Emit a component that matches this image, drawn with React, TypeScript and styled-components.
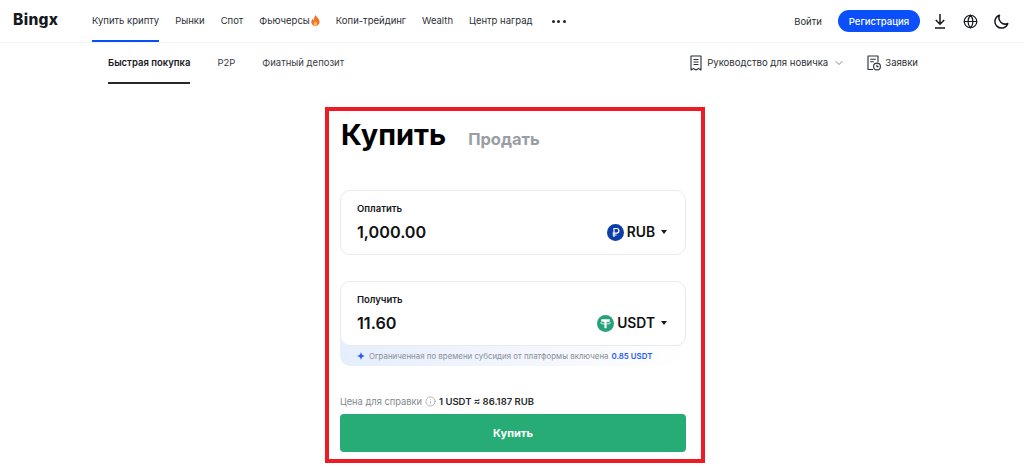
import styled, { createGlobalStyle } from "styled-components";
import { ChevronDown, Globe, Info } from "lucide-react";

const GlobalStyle = createGlobalStyle`
  html, body {
    margin: 0;
    padding: 0;
    background: #fff;
    font-family: Inter, "Noto Sans", sans-serif;
    color: #111;
  }
  * { box-sizing: border-box; }
`;

const Page = styled.div`
  width: 1024px;
  height: 467px;
  overflow: hidden;
`;

const Header = styled.header`
  height: 43px;
  display: flex;
  align-items: center;
  padding: 0 15px 0 13px;
  border-bottom: 1px solid #f2f3f4;
`;

const Logo = styled.div`
  width: 79px;
  font-size: 15.5px;
  font-weight: 800;
  letter-spacing: 0.35px;
  color: #16181c;
  line-height: 1;
  margin-top: -2px;
`;

const Nav = styled.nav`
  display: flex;
  align-items: stretch;
  gap: 16px;
  height: 42px;
`;

const NavItem = styled.a<{ $active?: boolean }>`
  display: flex;
  align-items: center;
  gap: 1px;
  font-size: 9.5px;
  color: #2b2f36;
  white-space: nowrap;
  padding-top: 1px;
  border-bottom: 2px solid ${(p) => (p.$active ? "#0a4ffa" : "transparent")};
`;

const Dots = styled.span`
  display: flex;
  gap: 2.5px;
  align-items: center;
  margin-left: 3px;
  & > i {
    width: 3px;
    height: 3px;
    border-radius: 50%;
    background: #22252a;
  }
`;

const Right = styled.div`
  margin-left: auto;
  display: flex;
  align-items: center;
`;

const Login = styled.a`
  font-size: 9.55px;
  color: #2b2f36;
  margin-right: 16px;
`;

const Register = styled.button`
  width: 82px;
  height: 22px;
  border: none;
  border-radius: 11px;
  background: #0a4ffa;
  color: #fff;
  font: 500 9.55px Inter, sans-serif;
  padding: 0;
  margin-right: 13px;
`;

const HeaderIcons = styled.div`
  display: flex;
  align-items: center;
  gap: 16px;
  color: #16181c;
`;

const SubNav = styled.div`
  height: 41px;
  display: flex;
  align-items: stretch;
  padding: 0 106px 0 108px;
`;

const Tab = styled.a<{ $active?: boolean }>`
  display: flex;
  align-items: center;
  font-size: 9.5px;
  font-weight: ${(p) => (p.$active ? 600 : 400)};
  color: ${(p) => (p.$active ? "#16181c" : "#3a3e45")};
  margin-right: 27px;
  border-bottom: 2px solid ${(p) => (p.$active ? "#26282c" : "transparent")};
`;

const SubRight = styled.div`
  margin-left: auto;
  display: flex;
  align-items: center;
  gap: 22px;
  font-size: 9.55px;
  color: #2b2f36;
  padding-bottom: 2px;
`;

const SubLink = styled.a<{ $gap: number }>`
  display: flex;
  align-items: center;
  gap: ${(p) => p.$gap}px;
`;

const Main = styled.main`
  display: flex;
  justify-content: center;
  padding-top: 23px;
  padding-left: 6px;
`;

const TradeBox = styled.section`
  width: 380px;
  height: 356px;
  border: 4px solid #ed1c24;
  padding: 0 15px 0 11px;
  display: flex;
  flex-direction: column;
`;

const Titles = styled.div`
  display: flex;
  align-items: flex-end;
  height: 44px;
  gap: 22px;
  margin-bottom: 35px;
`;

const Title = styled.h1`
  margin: 0 0 0 1px;
  font-size: 29px;
  font-weight: 700;
  line-height: 40px;
  color: #000;
`;

const SellTab = styled.span`
  font-size: 16.5px;
  font-weight: 700;
  line-height: 24px;
  margin-bottom: 4px;
  color: #9a9da3;
`;

const Field = styled.div`
  position: relative;
  z-index: 1;
  height: 65px;
  background: #fff;
  border: 1px solid #e9eaec;
  border-radius: 10px;
  padding: 12px 18px 0 16px;
`;

const FieldLabel = styled.div`
  font-size: 9.5px;
  font-weight: 600;
  line-height: 12px;
  color: #16181c;
`;

const FieldRow = styled.div`
  display: flex;
  align-items: center;
  justify-content: space-between;
  height: 24px;
  margin-top: 5px;
`;

const Amount = styled.div`
  font-size: 16.2px;
  font-weight: 600;
  color: #111;
`;

const Coin = styled.div`
  display: flex;
  align-items: center;
  gap: 3px;
  font-size: 13.8px;
  font-weight: 600;
  color: #111;
`;

const Caret = styled.span`
  width: 0;
  height: 0;
  margin-left: 3px;
  border-left: 3.5px solid transparent;
  border-right: 3.5px solid transparent;
  border-top: 4px solid #16181c;
`;

const Gap = styled.div`
  height: 26px;
`;

const Subsidy = styled.div`
  height: 30px;
  margin-top: -10px;
  padding: 10px 0 0 17px;
  display: flex;
  align-items: center;
  gap: 4px;
  font-size: 7.9px;
  color: #8a8f98;
  border-radius: 0 0 10px 10px;
  background: linear-gradient(90deg, #e6eefc 0%, #f3f6fd 55%, #ffffff 100%);
  & > b {
    font-weight: 600;
    color: #2a5cf5;
    margin-left: -1px;
  }
`;

const PriceLine = styled.div`
  margin-top: 28px;
  display: flex;
  align-items: center;
  gap: 3px;
  height: 14px;
  font-size: 9.3px;
  color: #84888f;
  & > b {
    font-size: 9.5px;
    font-weight: 600;
    color: #26282c;
  }
`;

const BuyButton = styled.button`
  margin-top: 6px;
  height: 38px;
  border: none;
  border-radius: 4px;
  background: #28ac75;
  color: #fff;
  font: 700 11px Inter, sans-serif;
`;

const Flame = () => (
  <svg width="9" height="11" viewBox="0 0 9 11">
    <path
      d="M4.8 0C5.2 2 8.6 3.6 8.6 7c0 2.300-1.900 4-4.200 4S.3 9.300.3 7c0-1.600.9-2.800 1.700-3.500 0 1 .4 1.600 1 1.900C2.900 3.400 3.300 1.400 4.800 0z"
      fill="#f0742a"
    />
    <path d="M4.500 6c.3 1 1.700 1.600 1.700 3 0 1-.8 1.800-1.700 1.800S2.800 10 2.800 9c0-1.300 1.300-1.700 1.700-3z" fill="#fbc04a" />
  </svg>
);

const DownloadIcon = () => (
  <svg width="14" height="15" viewBox="0 0 14 15" fill="none" stroke="currentColor" strokeWidth="1.500">
    <path d="M7 0v10M2.800 6L7 10.200 11.200 6M2 14h10" />
  </svg>
);

const MoonIcon = () => (
  <svg width="15" height="15" viewBox="0 0 15 15" fill="none" stroke="currentColor" strokeWidth="1.500">
    <path d="M5.500 1.200a6.300 6.300 0 0 0 8.300 8.300A6.600 6.600 0 1 1 5.500 1.200z" strokeLinejoin="round" />
  </svg>
);

const GuideIcon = () => (
  <svg width="12" height="16" viewBox="0 0 12 16" fill="none" stroke="#2b2f36" strokeWidth="1.100">
    <path d="M1 1h10v14l-2.500-1.500L6 15l-2.500-1.500L1 15z" strokeLinejoin="round" />
    <path d="M3.500 4.500h5M3.500 7h5M3.500 9.500h5" />
  </svg>
);

const OrdersIcon = () => (
  <svg width="14" height="16" viewBox="0 0 14 16" fill="none" stroke="#2b2f36" strokeWidth="1.100">
    <path d="M6 14.500H1V1h10v6" strokeLinejoin="round" />
    <path d="M3.200 4.200h5.600M3.200 6.800h3.500" />
    <circle cx="10" cy="11.500" r="3.400" />
    <path d="M10 9.800v1.800h1.500" />
  </svg>
);

const RubIcon = () => (
  <svg width="17" height="17" viewBox="0 0 17 17">
    <circle cx="8.500" cy="8.500" r="8.500" fill="#0c3ea8" />
    <path
      d="M7 13V4.500h2.600a2.300 2.300 0 0 1 0 4.600H5.600M5.600 11h4"
      stroke="#fff"
      strokeWidth="1.200"
      fill="none"
    />
  </svg>
);

const UsdtIcon = () => (
  <svg width="17" height="17" viewBox="0 0 17 17">
    <circle cx="8.500" cy="8.500" r="8.500" fill="#26a17b" />
    <path d="M4.300 4.300h8.400v1.900H9.600v7H7.400v-7H4.300z" fill="#fff" />
    <ellipse cx="8.500" cy="7.800" rx="5" ry="1.300" fill="none" stroke="#fff" strokeWidth=".8" />
  </svg>
);

const Sparkle = () => (
  <svg width="8" height="8" viewBox="0 0 8 8">
    <path d="M4 0c.4 2.300 1.500 3.500 4 4-2.500.5-3.600 1.700-4 4-.4-2.300-1.500-3.500-4-4 2.500-.5 3.600-1.700 4-4z" fill="#2a5cf5" />
  </svg>
);

const App = () => {
  return (
    <Page>
      <GlobalStyle />
      <Header>
        <Logo>Bingx</Logo>
        <Nav>
          <NavItem $active>Купить крипту</NavItem>
          <NavItem>Рынки</NavItem>
          <NavItem>Спот</NavItem>
          <NavItem>
            Фьючерсы
            <Flame />
          </NavItem>
          <NavItem>Копи-трейдинг</NavItem>
          <NavItem>Wealth</NavItem>
          <NavItem>Центр наград</NavItem>
          <Dots>
            <i />
            <i />
            <i />
          </Dots>
        </Nav>
        <Right>
          <Login>Войти</Login>
          <Register>Регистрация</Register>
          <HeaderIcons>
            <DownloadIcon />
            <Globe size={15} strokeWidth={1.9} />
            <MoonIcon />
          </HeaderIcons>
        </Right>
      </Header>
      <SubNav>
        <Tab $active>Быстрая покупка</Tab>
        <Tab>P2P</Tab>
        <Tab>Фиатный депозит</Tab>
        <SubRight>
          <SubLink $gap={5}>
            <GuideIcon />
            Руководство для новичка
            <ChevronDown size={12} strokeWidth={1.2} />
          </SubLink>
          <SubLink $gap={4}>
            <OrdersIcon />
            Заявки
          </SubLink>
        </SubRight>
      </SubNav>
      <Main>
        <TradeBox>
          <Titles>
            <Title>Купить</Title>
            <SellTab>Продать</SellTab>
          </Titles>
          <Field>
            <FieldLabel>Оплатить</FieldLabel>
            <FieldRow>
              <Amount>1,000.00</Amount>
              <Coin>
                <RubIcon />
                RUB
                <Caret />
              </Coin>
            </FieldRow>
          </Field>
          <Gap />
          <Field>
            <FieldLabel>Получить</FieldLabel>
            <FieldRow>
              <Amount>11.60</Amount>
              <Coin>
                <UsdtIcon />
                USDT
                <Caret />
              </Coin>
            </FieldRow>
          </Field>
          <Subsidy>
            <Sparkle />
            Ограниченная по времени субсидия от платформы включена <b>0.85 USDT</b>
          </Subsidy>
          <PriceLine>
            Цена для справки
            <Info size={11} strokeWidth={1.3} />
            <b>1 USDT ≈ 86.187 RUB</b>
          </PriceLine>
          <BuyButton>Купить</BuyButton>
        </TradeBox>
      </Main>
    </Page>
  );
};

export default App;
